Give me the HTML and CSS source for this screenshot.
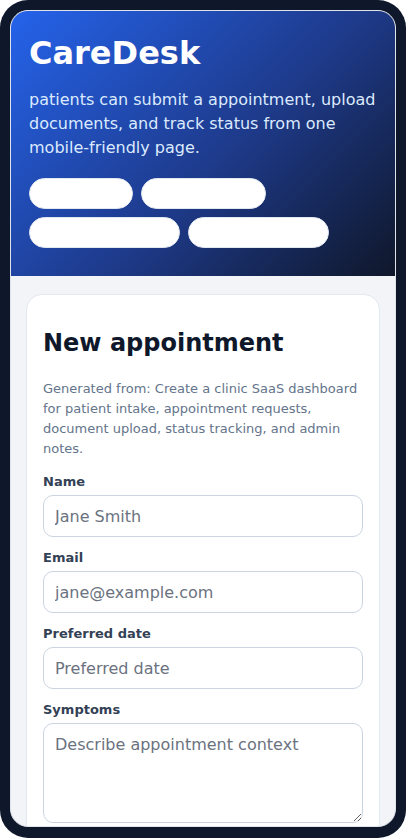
FILE: index.html
```html
<!DOCTYPE html>
<html lang="en">
<head>
<meta charset="utf-8">
<meta name="viewport" content="width=device-width, initial-scale=1">
<title>CareDesk</title>
<link rel="stylesheet" href="styles.css">
</head>
<body>
<div class="device">
  <div class="screen">
    <header class="hero">
      <h1 class="brand">CareDesk</h1>
      <p class="lead">patients can submit a appointment, upload documents, and track status from one mobile-friendly page.</p>
      <nav class="chips">
        <span class="chip chip-a"></span>
        <span class="chip chip-b"></span>
        <span class="chip chip-c"></span>
        <span class="chip chip-d"></span>
      </nav>
    </header>

    <main class="content">
      <section class="card">
        <h2 class="card-title">New appointment</h2>
        <p class="card-desc">Generated from: Create a clinic SaaS dashboard for patient intake, appointment requests, document upload, status tracking, and admin notes.</p>
        <form class="form">
          <div class="field">
            <label class="label" for="name">Name</label>
            <input class="input" id="name" type="text" placeholder="Jane Smith">
          </div>
          <div class="field">
            <label class="label" for="email">Email</label>
            <input class="input" id="email" type="email" placeholder="jane@example.com">
          </div>
          <div class="field">
            <label class="label" for="date">Preferred date</label>
            <input class="input" id="date" type="text" placeholder="Preferred date">
          </div>
          <div class="field">
            <label class="label" for="symptoms">Symptoms</label>
            <textarea class="input textarea" id="symptoms" placeholder="Describe appointment context"></textarea>
          </div>
        </form>
      </section>
    </main>
  </div>
</div>
</body>
</html>
```
FILE: styles.css
```css
* {
  box-sizing: border-box;
}

html,
body {
  margin: 0;
  padding: 0;
  background: #ffffff;
  font-family: "DejaVu Sans", "Noto Sans", sans-serif;
}

/* phone frame */
.device {
  width: 406px;
  height: 838px;
  padding: 10px 10px 11px;
  background: #0f172a;
  border-radius: 28px;
}

.screen {
  height: 100%;
  border: 1px solid #dfe3ea;
  border-radius: 18px;
  overflow: hidden;
  background: #f2f4f7;
}

/* top hero */
.hero {
  padding: 24px 18px 28px;
  background: linear-gradient(135deg, #2563eb 0%, #1e3a8a 55%, #0f172a 100%);
  color: #ffffff;
}

.brand {
  margin: 0;
  font-size: 32px;
  font-weight: 700;
  line-height: 37px;
  letter-spacing: 0;
}

.lead {
  margin: 16px 0 0;
  font-size: 16px;
  line-height: 24px;
  color: #dbeafe;
}

.chips {
  display: flex;
  flex-wrap: wrap;
  gap: 8px 8px;
  margin-top: 18px;
  width: 310px;
}

.chip {
  display: block;
  height: 31px;
  border-radius: 999px;
  background: #ffffff;
  border: 1px solid #e2e8f0;
}

.chip-a { width: 104px; }
.chip-b { width: 125px; }
.chip-c { width: 151px; }
.chip-d { width: 141px; }

/* form card */
.content {
  padding: 18px 15px 0;
}

.card {
  background: #ffffff;
  border: 1px solid #e2e8f0;
  border-radius: 16px;
  padding: 16px 16px 80px;
}

.card-title {
  margin: 18px 0 0;
  font-size: 24px;
  line-height: 28px;
  font-weight: 700;
  color: #0f172a;
}

.card-desc {
  margin: 22px 0 0;
  font-size: 13px;
  line-height: 20px;
  color: #64748b;
}

.form {
  display: flex;
  flex-direction: column;
  gap: 13px;
  margin-top: 15px;
}

.field {
  display: flex;
  flex-direction: column;
}

.label {
  font-size: 13px;
  line-height: 15px;
  font-weight: 700;
  color: #334155;
  margin-bottom: 6px;
}

.input {
  width: 100%;
  height: 42px;
  padding: 0 11px;
  border: 1px solid #cbd5e1;
  border-radius: 10px;
  background: #ffffff;
  font-family: inherit;
  font-size: 16px;
  color: #0f172a;
  outline: none;
}

.input::placeholder {
  color: #6b7280;
}

.textarea {
  height: 100px;
  padding: 10px 11px;
  line-height: 22px;
  resize: vertical;
}
```
